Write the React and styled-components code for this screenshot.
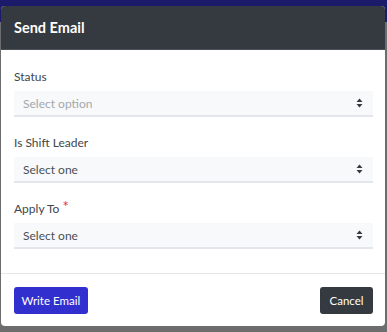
import React from "react";
import styled, { createGlobalStyle } from "styled-components";

const Global = createGlobalStyle`
  html, body { margin: 0; padding: 0; }
  body {
    font-family: Lato, "Open Sans", "Noto Sans", sans-serif;
    background: #6e6e72;
  }
`;

const Page = styled.div`
  width: 387px;
  height: 332px;
  overflow: hidden;
  background: linear-gradient(#1c1a6a 0 22px, #6d6d70 22px);
  padding: 6px 2px 0 1px;
  box-sizing: border-box;
`;

const Modal = styled.div`
  background: #fff;
  border-radius: 4px;
  overflow: hidden;
  height: 320px;
  display: flex;
  flex-direction: column;
`;

const Header = styled.div`
  background: #343a40;
  height: 44px;
  flex: none;
  border-bottom: 1px solid #4a5057;
  display: flex;
  align-items: center;
  padding: 0 13px;
  box-sizing: border-box;
`;

const Title = styled.h5`
  margin: 0;
  color: #fff;
  font-size: 14.5px;
  font-weight: 700;
`;

const Body = styled.div`
  padding: 19px 12px 0 13px;
  display: flex;
  flex-direction: column;
  gap: 18px;
  height: 224px;
  flex: none;
  box-sizing: border-box;
  border-bottom: 1px solid #e5e7ea;
`;

const Field = styled.div`
  display: flex;
  flex-direction: column;
  gap: 6px;
`;

const Label = styled.label`
  font-size: 12px;
  color: #41464b;
  line-height: 16px;
`;

const Star = styled.span`
  color: #e8303a;
  margin-left: 3px;
  font-size: 15px;
  line-height: 0;
  position: relative;
  top: -1px;
`;

const Select = styled.div`
  height: 26px;
  box-sizing: border-box;
  background: #f8f9fa;
  border-bottom: 2px solid #e3e6ea;
  display: flex;
  align-items: center;
  justify-content: space-between;
  padding: 0 10px 0 9px;
  font-size: 12px;
  color: ${(p) => (p.$placeholder ? "#a3a8ad" : "#495057")};
`;

const Footer = styled.div`
  flex: 1;
  display: flex;
  align-items: center;
  justify-content: space-between;
  padding: 0 12px 0 13px;
`;

const Button = styled.button`
  height: 27px;
  border: none;
  border-radius: 3px;
  padding: 0 ${(p) => (p.$variant === "primary" ? "7.5px" : "9.5px")};
  font-family: inherit;
  font-size: 11.5px;
  color: #fff;
  background: ${(p) => (p.$variant === "primary" ? "#3130cf" : "#343a40")};
`;

const Arrows = () => (
  <svg width="7" height="10" viewBox="0 0 7 10">
    <path d="M3.5 0.5 L6.5 4 L0.5 4 Z" fill="#343a40" />
    <path d="M3.5 9.5 L6.5 6 L0.5 6 Z" fill="#343a40" />
  </svg>
);

const fields = [
  { label: "Status", value: "Select option", placeholder: true },
  { label: "Is Shift Leader", value: "Select one" },
  { label: "Apply To", value: "Select one", required: true },
];

export default function App() {
  return (
    <>
      <Global />
      <Page>
        <Modal>
          <Header>
            <Title>Send Email</Title>
          </Header>
          <Body>
            {fields.map((f) => (
              <Field key={f.label}>
                <Label>
                  {f.label}
                  {f.required && <Star>*</Star>}
                </Label>
                <Select $placeholder={f.placeholder}>
                  <span>{f.value}</span>
                  <Arrows />
                </Select>
              </Field>
            ))}
          </Body>
          <Footer>
            <Button $variant="primary">Write Email</Button>
            <Button>Cancel</Button>
          </Footer>
        </Modal>
      </Page>
    </>
  );
}
